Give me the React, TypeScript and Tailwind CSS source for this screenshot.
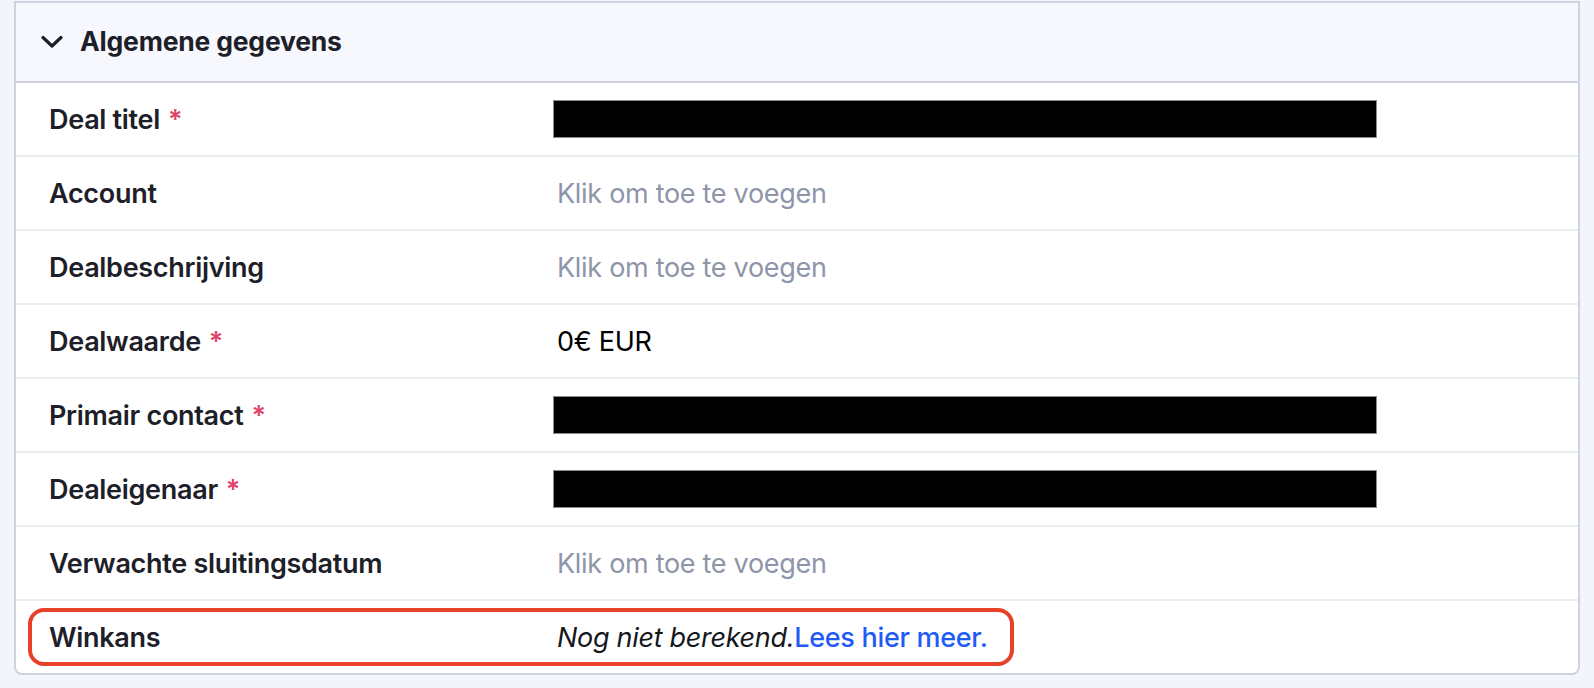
import { ReactNode } from "react";

type Row = {
  label: string;
  required?: boolean;
  value: ReactNode;
  highlight?: boolean;
};

const placeholder = <span className="text-[#8e95aa]">Klik om toe te voegen</span>;
const redacted = <div className="-ml-[4px] -mt-[3px] h-[38px] w-[824px] bg-black border border-[#8a8a8a]" />;

const rows: Row[] = [
  { label: "Deal titel", required: true, value: redacted },
  { label: "Account", value: placeholder },
  { label: "Dealbeschrijving", value: placeholder },
  { label: "Dealwaarde", required: true, value: <span className="text-black">0€ EUR</span> },
  { label: "Primair contact", required: true, value: redacted },
  { label: "Dealeigenaar", required: true, value: redacted },
  { label: "Verwachte sluitingsdatum", value: placeholder },
  {
    label: "Winkans",
    highlight: true,
    value: (
      <span>
        <span className="italic text-[#15171c]">Nog niet berekend.</span>
        <a className="text-[#1f5bf5] font-medium">Lees hier meer.</a>
      </span>
    ),
  },
];

function Chevron() {
  return (
    <svg width="22" height="14" viewBox="0 0 22 14" fill="none">
      <path d="M2 2.5 L11 11 L20 2.5" stroke="#1d2028" strokeWidth="3.2" strokeLinecap="round" strokeLinejoin="round" />
    </svg>
  );
}

export default function App() {
  return (
    <div
      className="min-h-screen bg-[#f2f5fc] px-[14px] pt-px pb-4"
      style={{ fontFamily: "Inter, 'Noto Sans', sans-serif" }}
    >
      <div className="bg-white border-2 border-[#cfd3e0] rounded-b-[8px] overflow-hidden">
        {/* Section header */}
        <div className="h-[80px] bg-[#f7f8fd] border-b-2 border-[#cfd3e0] flex items-center pl-[25px] gap-[17px]">
          <Chevron />
          <h2 className="text-[26.5px] font-bold text-[#1d2028] tracking-[-0.2px]">Algemene gegevens</h2>
        </div>

        {rows.map((row, i) => (
          <div
            key={row.label}
            className={`relative flex items-center pt-[3px] ${i < rows.length - 1 ? "h-[74px] border-b-2 border-[#ecedf3]" : "h-[72px]"}`}
          >
            <div className="w-[541px] shrink-0 pl-[33px] text-[27px] font-semibold text-[#1d2028] tracking-[-0.3px]">
              {row.label}
              {row.required && <span className="ml-[8px] text-[#e0446c]">*</span>}
            </div>
            <div className="text-[27px] tracking-[-0.3px]">{row.value}</div>
            {row.highlight && (
              <div className="absolute left-[12px] top-[7px] w-[986px] h-[58px] rounded-[16px] border-4 border-[#e8412a] pointer-events-none" />
            )}
          </div>
        ))}
      </div>
    </div>
  );
}
